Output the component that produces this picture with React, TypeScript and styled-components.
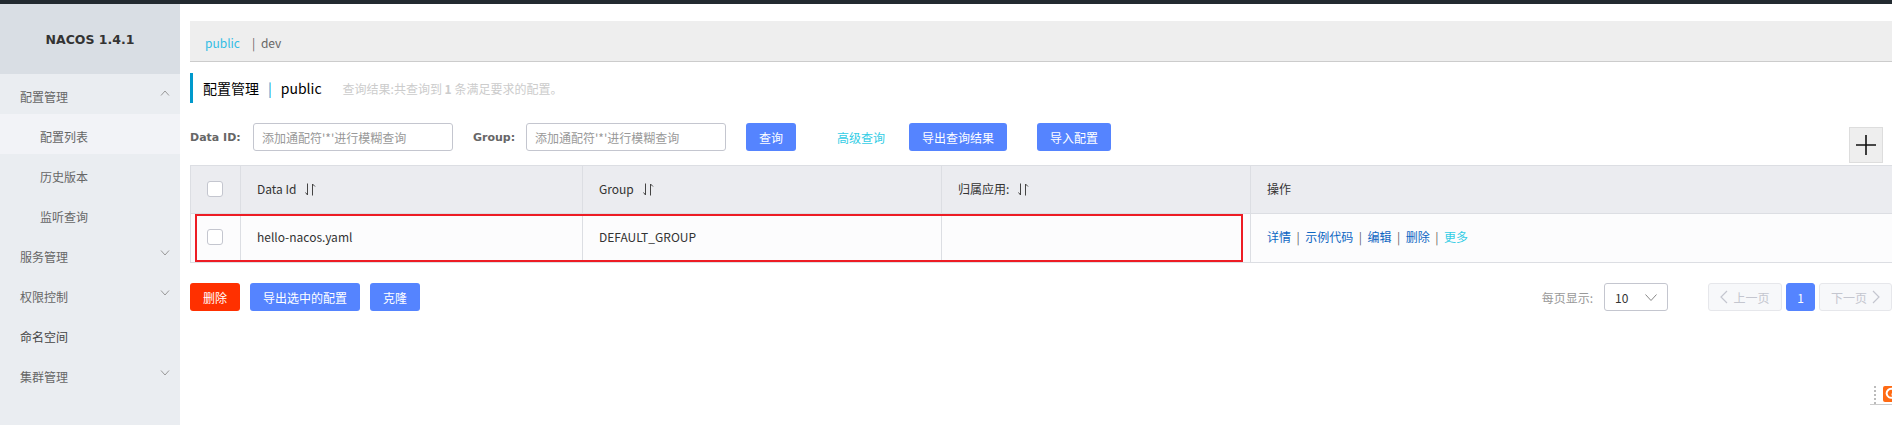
import React from 'react';
import styled, { createGlobalStyle } from 'styled-components';

const GlobalStyle = createGlobalStyle`
  html, body {
    margin: 0;
    padding: 0;
    height: 100%;
    overflow: hidden;
    background: #fff;
  }
  body {
    font-family: "Noto Sans CJK SC", "Noto Sans", sans-serif;
    font-size: 12px;
    color: #333;
  }
  * {
    box-sizing: border-box;
  }
`;

const Page = styled.div`
  width: 1892px;
  height: 425px;
  display: flex;
  flex-direction: column;
  overflow: hidden;
`;

const TopBar = styled.div`
  height: 4px;
  flex: none;
  background: #222a30;
`;

const Body = styled.div`
  flex: 1;
  display: flex;
  min-height: 0;
`;

const Sidebar = styled.aside`
  width: 180px;
  flex: none;
  background: #eaedf1;
`;

const Logo = styled.div`
  height: 70px;
  background: #d9dee4;
  display: flex;
  align-items: center;
  justify-content: center;
  font-family: "DejaVu Sans", sans-serif;
  font-size: 12.5px;
  font-weight: 700;
  color: #333;
`;

const MenuItem = styled.div<{ $sub?: boolean; $active?: boolean; $dark?: boolean }>`
  height: 40px;
  display: flex;
  align-items: center;
  justify-content: space-between;
  padding: 5px 10px 0 ${(p) => (p.$sub ? '40px' : '20px')};
  background: ${(p) => (p.$active ? '#f2f3f7' : 'transparent')};
  color: ${(p) => (p.$dark ? '#444' : '#666')};
  font-size: 12px;
`;

const Chevron = styled.svg`
  width: 10px;
  height: 6px;
  margin-top: -7px;
  fill: none;
  stroke: #999;
  stroke-width: 1;
`;

const Main = styled.main`
  flex: 1;
  min-width: 0;
  padding: 17px 0 0 10px;
  position: relative;
`;

const EnvBar = styled.div`
  height: 41px;
  background: #eee;
  border-bottom: 1px solid #ccc;
  display: flex;
  align-items: center;
  padding: 3px 0 0 15px;
  font-size: 12px;
`;

const EnvActive = styled.span`
  color: #33bde5;
  width: 47px;
`;

const EnvOther = styled.span`
  color: #666;
  word-spacing: 3px;
`;

const TitleRow = styled.div`
  height: 30px;
  margin-top: 11px;
  border-left: 3px solid #09c;
  padding-left: 10px;
  display: flex;
  align-items: center;
  color: #000;
  font-size: 14px;
`;

const TitleSep = styled.span`
  margin: 0 9px;
  color: #09c;
`;

const ResultText = styled.span`
  margin-left: 21px;
  font-size: 12px;
  color: #ccc;
`;

const FilterRow = styled.div`
  margin-top: 20px;
  height: 28px;
  display: flex;
  align-items: center;
`;

const FilterLabel = styled.label<{ $width: number }>`
  width: ${(p) => p.$width}px;
  font-family: "DejaVu Sans", sans-serif;
  font-weight: 700;
  font-size: 11px;
  color: #666;
`;

const FilterInput = styled.input`
  width: 200px;
  height: 28px;
  margin-right: 20px;
  padding: 0 8px;
  border: 1px solid #c4c6cf;
  border-radius: 3px;
  background: #fff;
  font: inherit;
  outline: none;
  &::placeholder {
    color: #999;
    opacity: 1;
  }
`;

const Button = styled.button<{ $danger?: boolean; $width: number; $gap?: number }>`
  width: ${(p) => p.$width}px;
  height: 28px;
  margin-right: ${(p) => p.$gap ?? 0}px;
  padding: 0;
  border: none;
  border-radius: 3px;
  background: ${(p) => (p.$danger ? '#ff3000' : '#5584ff')};
  color: #fff;
  font: inherit;
`;

const AdvancedLink = styled.a`
  width: 72px;
  margin-left: 41px;
  color: #33cde5;
`;

const AddButton = styled.div`
  position: absolute;
  top: 123px;
  left: 1669px;
  width: 34px;
  height: 36px;
  background: #eee;
  border: 1px solid #ddd;
  display: flex;
  align-items: center;
  justify-content: center;
`;

const AddIcon = styled.svg`
  width: 20px;
  height: 20px;
  stroke: #111;
  stroke-width: 1.6;
`;

const TableWrap = styled.div`
  margin-top: 14px;
  position: relative;
`;

const Table = styled.table`
  width: 1720px;
  border-collapse: collapse;
  table-layout: fixed;
  border: 1px solid #dcdee3;
  color: #333;
`;

const HeadCell = styled.th`
  height: 48px;
  padding: 0 16px 2px;
  background: #ebecf0;
  border: 1px solid #dcdee3;
  font-weight: 400;
  text-align: left;
`;

const Cell = styled.td`
  height: 49px;
  padding: 0 16px 3px;
  background: #fcfcfd;
  border: 1px solid #dcdee3;
`;

const Check = styled.span`
  display: block;
  width: 16px;
  height: 16px;
  border: 1px solid #c4c6cf;
  border-radius: 3px;
  background: #fff;
`;

const SortIcon = styled.svg`
  width: 11px;
  height: 13px;
  margin-left: 9px;
  vertical-align: -2px;
  fill: none;
  stroke: #444;
  stroke-width: 1;
`;

const OpLink = styled.a<{ $more?: boolean }>`
  color: ${(p) => (p.$more ? '#33cde5' : '#0d66c2')};
`;

const OpSep = styled.span`
  margin: 0 5.5px;
  color: #666;
`;

const Highlight = styled.div`
  position: absolute;
  top: 49px;
  left: 5px;
  width: 1048px;
  height: 48px;
  border: 2px solid #ed1c24;
  pointer-events: none;
`;

const BottomRow = styled.div`
  margin-top: 20px;
  margin-right: -4px;
  height: 28px;
  display: flex;
  align-items: center;
`;

const BottomSpacer = styled.div`
  flex: 1;
`;

const PageLabel = styled.span`
  color: #999;
  margin-right: 11px;
`;

const PageSelect = styled.div`
  width: 64px;
  height: 28px;
  margin-right: 40px;
  padding: 0 10px;
  border: 1px solid #c4c6cf;
  border-radius: 3px;
  display: flex;
  align-items: center;
  justify-content: space-between;
  color: #333;
`;

const PageButton = styled.div<{ $width: number; $current?: boolean }>`
  width: ${(p) => p.$width}px;
  flex: none;
  height: 28px;
  margin-right: 4px;
  border: 1px solid ${(p) => (p.$current ? '#5584ff' : '#e6e7eb')};
  border-radius: 3px;
  background: ${(p) => (p.$current ? '#5584ff' : '#f7f8fa')};
  color: ${(p) => (p.$current ? '#fff' : '#c4c6cf')};
  display: flex;
  align-items: center;
  justify-content: center;
  gap: 5px;
`;

const PageArrow = styled.svg`
  width: 8px;
  height: 14px;
  fill: none;
  stroke: #c4c6cf;
  stroke-width: 1.2;
`;

const SelectArrow = styled.svg`
  width: 12px;
  height: 7px;
  fill: none;
  stroke: #888;
  stroke-width: 1;
`;

const Widget = styled.div`
  position: absolute;
  top: 380px;
  left: 1690px;
  width: 22px;
  height: 21px;
  border-bottom: 1px solid #ccc;
  display: flex;
  align-items: flex-start;
  gap: 7px;
  padding: 2px 0 0 4px;
`;

const WidgetDots = styled.div`
  width: 2px;
  height: 18px;
  border-left: 2px dotted #bbb;
  flex: none;
`;

const WidgetLogo = styled.svg`
  width: 16px;
  height: 16px;
  flex: none;
`;

const SortGlyph = () => (
  <SortIcon viewBox="0 0 11 13">
    <path d="M2.5 0.5V12L0.5 9.5" />
    <path d="M7.5 12.5V1L10 3.5" />
  </SortIcon>
);

const menu = [
  { label: '配置管理', open: true, hasArrow: true },
  { label: '配置列表', sub: true, active: true },
  { label: '历史版本', sub: true },
  { label: '监听查询', sub: true },
  { label: '服务管理', hasArrow: true },
  { label: '权限控制', hasArrow: true },
  { label: '命名空间', dark: true },
  { label: '集群管理', hasArrow: true },
];

const ops = ['详情', '示例代码', '编辑', '删除'];

const App: React.FC = () => {
  return (
    <Page>
      <GlobalStyle />
      <TopBar />
      <Body>
        <Sidebar>
          <Logo>NACOS 1.4.1</Logo>
          {menu.map((item) => (
            <MenuItem key={item.label} $sub={item.sub} $active={item.active} $dark={item.dark}>
              {item.label}
              {item.hasArrow && (
                <Chevron viewBox="0 0 10 6">
                  <path d={item.open ? 'M1 5.5L5 1L9 5.5' : 'M1 .5L5 5L9 .5'} />
                </Chevron>
              )}
            </MenuItem>
          ))}
        </Sidebar>
        <Main>
          <EnvBar>
            <EnvActive>public</EnvActive>
            <EnvOther>| dev</EnvOther>
          </EnvBar>
          <TitleRow>
            配置管理
            <TitleSep>|</TitleSep>
            public
            <ResultText>查询结果:共查询到 <strong>1</strong> 条满足要求的配置。</ResultText>
          </TitleRow>
          <FilterRow>
            <FilterLabel $width={63}>Data ID:</FilterLabel>
            <FilterInput placeholder={'添加通配符\'*\'进行模糊查询'} />
            <FilterLabel $width={53}>Group:</FilterLabel>
            <FilterInput placeholder={'添加通配符\'*\'进行模糊查询'} />
            <Button $width={50}>查询</Button>
            <AdvancedLink>高级查询</AdvancedLink>
            <Button $width={98} $gap={30}>导出查询结果</Button>
            <Button $width={74}>导入配置</Button>
          </FilterRow>
          <AddButton>
            <AddIcon viewBox="0 0 20 20">
              <path d="M10 0V20M0 10H20" />
            </AddIcon>
          </AddButton>
          <TableWrap>
            <Table>
              <colgroup>
                <col style={{ width: 50 }} />
                <col style={{ width: 342 }} />
                <col style={{ width: 359 }} />
                <col style={{ width: 309 }} />
                <col />
              </colgroup>
              <thead>
                <tr>
                  <HeadCell><Check /></HeadCell>
                  <HeadCell>Data Id<SortGlyph /></HeadCell>
                  <HeadCell>Group<SortGlyph /></HeadCell>
                  <HeadCell>归属应用:<SortGlyph /></HeadCell>
                  <HeadCell>操作</HeadCell>
                </tr>
              </thead>
              <tbody>
                <tr>
                  <Cell><Check /></Cell>
                  <Cell>hello-nacos.yaml</Cell>
                  <Cell>DEFAULT_GROUP</Cell>
                  <Cell />
                  <Cell>
                    {ops.map((op) => (
                      <React.Fragment key={op}>
                        <OpLink>{op}</OpLink>
                        <OpSep>|</OpSep>
                      </React.Fragment>
                    ))}
                    <OpLink $more>更多</OpLink>
                  </Cell>
                </tr>
              </tbody>
            </Table>
            <Highlight />
          </TableWrap>
          <BottomRow>
            <Button $danger $width={50} $gap={10}>删除</Button>
            <Button $width={110} $gap={10}>导出选中的配置</Button>
            <Button $width={50}>克隆</Button>
            <BottomSpacer />
            <PageLabel>每页显示:</PageLabel>
            <PageSelect>
              10
              <SelectArrow viewBox="0 0 12 7">
                <path d="M.5 .5L6 6.5L11.5 .5" />
              </SelectArrow>
            </PageSelect>
            <PageButton $width={74}>
              <PageArrow viewBox="0 0 8 14"><path d="M7 1L1 7L7 13" /></PageArrow>
              上一页
            </PageButton>
            <PageButton $width={29} $current>1</PageButton>
            <PageButton $width={73}>
              下一页
              <PageArrow viewBox="0 0 8 14"><path d="M1 1L7 7L1 13" /></PageArrow>
            </PageButton>
          </BottomRow>
          <Widget>
            <WidgetDots />
            <WidgetLogo viewBox="0 0 16 16">
              <rect width="16" height="16" rx="2" fill="#ff6a13" />
              <path d="M12 5A4.5 4.5 0 1 0 12.5 8.5H8.5" fill="none" stroke="#fff" strokeWidth="2" />
            </WidgetLogo>
          </Widget>
        </Main>
      </Body>
    </Page>
  );
};

export default App;
